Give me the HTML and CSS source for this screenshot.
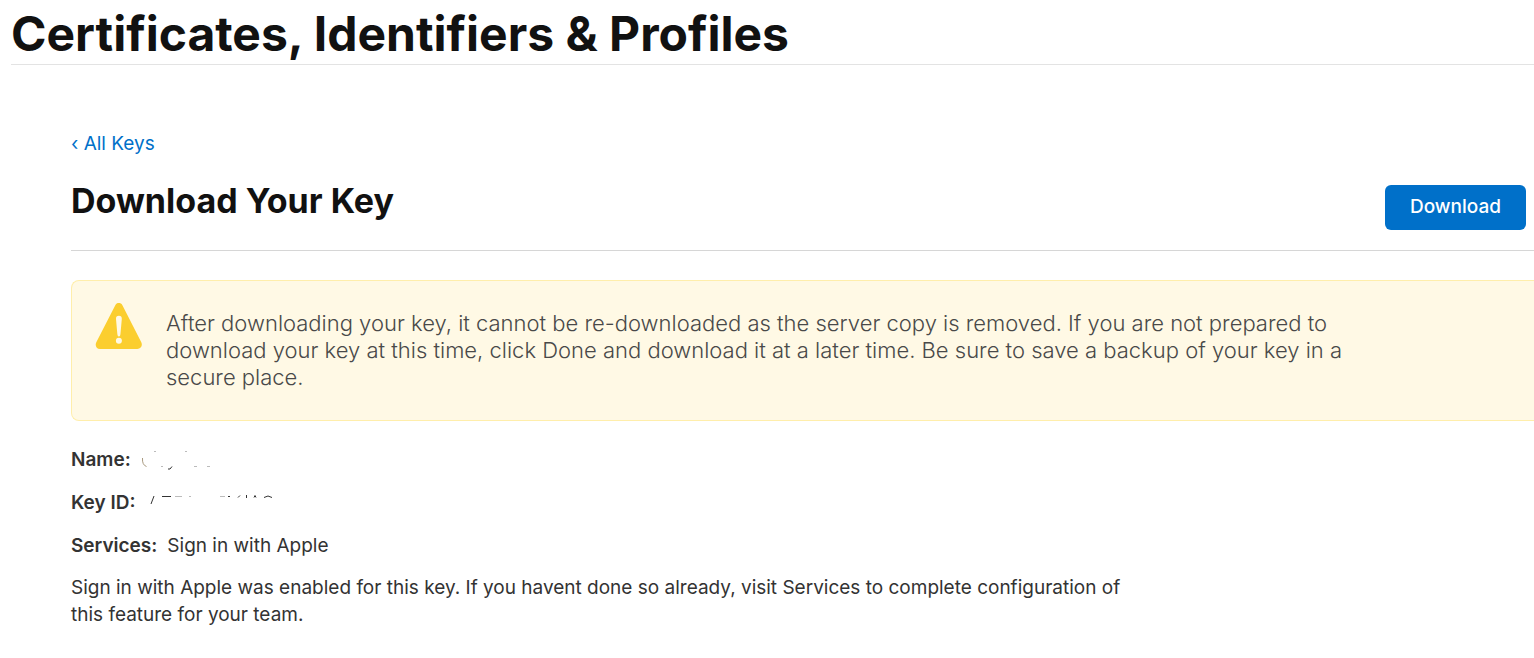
FILE: index.html
```html
<!DOCTYPE html>
<html lang="en">
<head>
<meta charset="utf-8">
<meta name="viewport" content="width=device-width, initial-scale=1">
<title>Certificates, Identifiers &amp; Profiles</title>
<link rel="stylesheet" href="styles.css">
</head>
<body>
<header class="page-header">
  <h1 class="page-title">Certificates, Identifiers &amp; Profiles</h1>
</header>
<main class="content">
  <a class="back-link" href="#">‹ All Keys</a>
  <div class="section-header">
    <h2 class="section-title">Download Your Key</h2>
    <button class="download-button" type="button">Download</button>
  </div>
  <section class="notice" role="alert">
    <svg class="notice-icon" viewBox="0 0 48 48" aria-hidden="true">
      <path fill="#fbce2f" d="M20.3 3.2C21.3 1.2 22.3 .9 23.8 .9s2.6.3 3.6 2.3l18.9 37.1c1.5 3-.2 6.7-4 6.7H5C1.200 47-.2 43.300 1.300 40.300Z"/>
      <path fill="#fff9e5" d="M23.900 13.800c2 0 3 1.200 2.900 3.200l-1.200 13.500c-.2 3-.7 4-1.700 4s-1.500-1-1.700-4L21 17c-.1-2 .9-3.200 2.900-3.200Z"/>
      <circle cx="23.900" cy="38.700" r="3" fill="#fff9e5"/>
    </svg>
    <p class="notice-text">After downloading your key, it cannot be re-downloaded as the server copy is removed. If you are not prepared to download your key at this time, click Done and download it at a later time. Be sure to save a backup of your key in a secure place.</p>
  </section>
  <dl class="details">
    <div class="detail">
      <dt>Name:</dt>
      <dd>
        <svg class="redacted" viewBox="0 0 132 24" aria-hidden="true">
          <path class="faint" d="M13 5.500h2M44 5.500h2M20 20.500h2M53 20.500h3M66 20.500h3"/>
          <path class="tan" d="M1.500 12q-.5 7 4 8.500"/>
          <path class="dark" d="M27 23h2l2-2.500"/>
        </svg>
      </dd>
    </div>
    <div class="detail">
      <dt>Key ID:</dt>
      <dd>
        <svg class="redacted" viewBox="0 0 132 24" aria-hidden="true">
          <path class="dark" d="M5 15l3-8M16 7.500h9M92 8.500l2-2M100.500 6v3M108 8.500l1-2 1 2M118 8.500q4-3 8 0M82 7.500h2"/>
          <path class="faint" d="M29 7.500h7M43 7.500h2M74 7.500h5"/>
        </svg>
      </dd>
    </div>
    <div class="detail">
      <dt>Services:</dt>
      <dd>Sign in with Apple</dd>
    </div>
  </dl>
  <p class="description">Sign in with Apple was enabled for this key. If you havent done so already, visit Services to complete configuration of this feature for your team.</p>
</main>
</body>
</html>
```
FILE: styles.css
```css
* {
  box-sizing: border-box;
}

body {
  margin: 0;
  background: #fff;
  color: #333;
  font: 400 19px/27px Inter, "Liberation Sans", sans-serif;
}

h1, h2, p, dl, dd {
  margin: 0;
}

.page-header {
  margin-left: 11px;
  padding-top: 4px;
  border-bottom: 1px solid #e3e3e3;
}

.page-title {
  color: #111;
  font-size: 48px;
  font-weight: 700;
  line-height: 60px;
}

.content {
  padding: 65px 0 24px 71px;
}

.back-link {
  display: inline-block;
  color: #0070c9;
  text-decoration: none;
}

.section-header {
  display: flex;
  justify-content: space-between;
  align-items: flex-start;
  padding: 28px 8px 20px 0;
  border-bottom: 1px solid #d6d6d6;
}

.section-title {
  color: #111;
  font-size: 34px;
  font-weight: 700;
  line-height: 32px;
}

.download-button {
  padding: 8px 25px 10px;
  border: 0;
  border-radius: 6px;
  background: #0070c9;
  color: #fff;
  font: 500 19px/27px Inter, "Liberation Sans", sans-serif;
}

.notice {
  display: flex;
  align-items: flex-start;
  gap: 23px;
  margin-top: 29px;
  padding: 21px 24px 29px 23px;
  border: 1px solid #ffeeab;
  border-right: 0;
  border-radius: 8px 0 0 8px;
  background: #fff9e5;
}

.notice-icon {
  flex: none;
  width: 48px;
  height: 48px;
}

.notice-text {
  max-width: 1200px;
  padding-top: 8px;
  color: #494949;
  font-size: 22px;
  font-weight: 300;
}

.details {
  display: grid;
  gap: 16px;
  margin-top: 25px;
}

.detail {
  display: flex;
  gap: 10px;
}

.detail dt {
  font-weight: 600;
}

.redacted {
  display: block;
  width: 132px;
  height: 24px;
  fill: none;
}

.redacted .dark {
  stroke: #333;
}

.redacted .faint {
  stroke: #bbb;
}

.redacted .tan {
  stroke: #a99a80;
}

.description {
  max-width: 1080px;
  margin-top: 15px;
}
```
